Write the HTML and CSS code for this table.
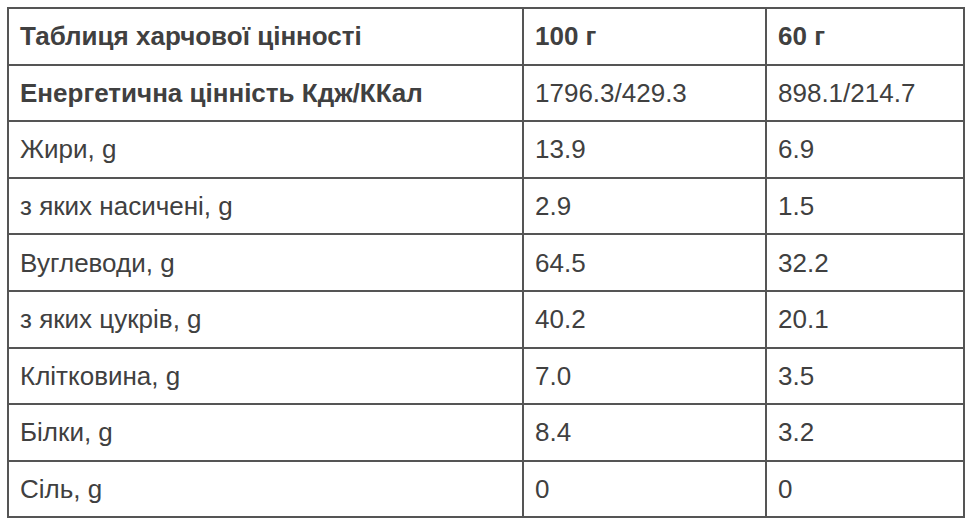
FILE: index.html
```html
<!DOCTYPE html>
<html>
<head>
<meta charset="utf-8">
<link rel="stylesheet" href="styles.css">
</head>
<body>
<table class="nutrition">
  <colgroup>
    <col class="c1"><col class="c2"><col class="c3">
  </colgroup>
  <tr class="head"><td>Таблиця харчової цінності</td><td>100 г</td><td>60 г</td></tr>
  <tr><td class="bold">Енергетична цінність Кдж/ККал</td><td>1796.3/429.3</td><td>898.1/214.7</td></tr>
  <tr><td>Жири, g</td><td>13.9</td><td>6.9</td></tr>
  <tr><td>з яких насичені, g</td><td>2.9</td><td>1.5</td></tr>
  <tr><td>Вуглеводи, g</td><td>64.5</td><td>32.2</td></tr>
  <tr><td>з яких цукрів, g</td><td>40.2</td><td>20.1</td></tr>
  <tr><td>Клітковина, g</td><td>7.0</td><td>3.5</td></tr>
  <tr><td>Білки, g</td><td>8.4</td><td>3.2</td></tr>
  <tr><td>Сіль, g</td><td>0</td><td>0</td></tr>
</table>
</body>
</html>
```
FILE: styles.css
```css
html, body {
  margin: 0;
  background: #ffffff;
}
body {
  padding: 7px 0 0 7px;
  font-family: "Liberation Sans", Arial, sans-serif;
  color: #404040;
}
.nutrition {
  border-collapse: collapse;
  table-layout: fixed;
  width: 956px;
}
.c1 { width: 515px; }
.c2 { width: 243px; }
.c3 { width: 198px; }
.nutrition td {
  border: 2px solid #555555;
  height: 54.6px;
  padding: 0 0 0 11px;
  font-size: 26px;
  line-height: 30px;
  vertical-align: middle;
  white-space: nowrap;
}
.nutrition .head td,
.nutrition td.bold {
  font-weight: bold;
}
```
